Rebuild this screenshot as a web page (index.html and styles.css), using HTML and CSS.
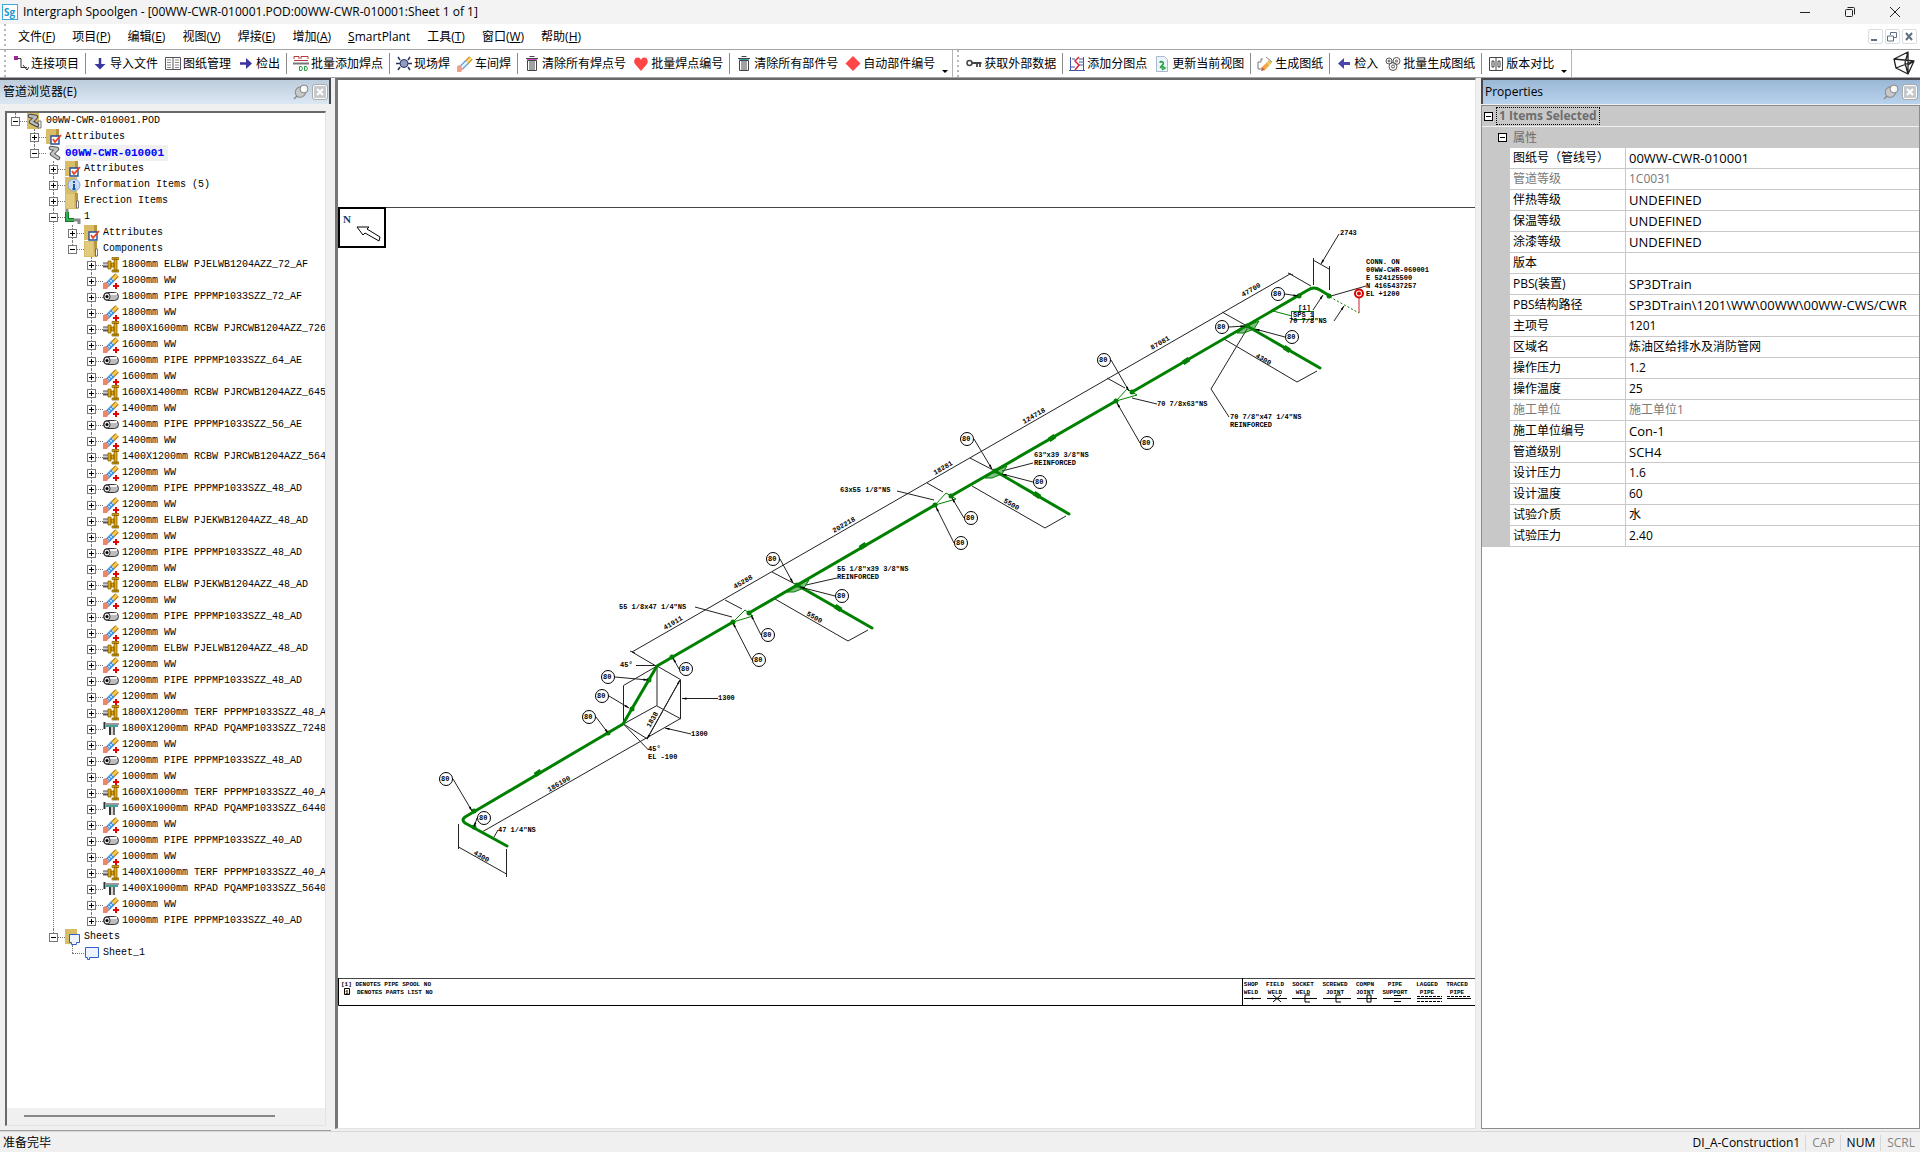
FILE: index.html
```html
<!DOCTYPE html>
<html lang="zh-CN">
<head>
<meta charset="utf-8">
<title>Intergraph Spoolgen</title>
<link rel="stylesheet" href="styles.css">
</head>
<body>
<svg class="sprite" aria-hidden="true">
  <symbol id="i-pin" viewBox="0 0 16 16"><path d="M1 15l5-5" stroke="#888" stroke-width="1.500"/><ellipse cx="7.500" cy="8" rx="5.500" ry="5" fill="#c8c8c8" stroke="#888" transform="rotate(-45 7.500 8)"/><circle cx="11" cy="5" r="4" fill="#f2f2f2" stroke="#888"/><circle cx="10" cy="5" r="2" fill="#fff"/></symbol>
  <symbol id="i-folder" viewBox="0 0 16 16"><path d="M0 0h11l2 2v14H0z" fill="#d9bd66"/><path d="M10 0h3v15h-2z" fill="#b7953e"/><path d="M1 1h8v14H1z" fill="#e2ca7e"/><path d="M11.500 8h2v7h-2z" fill="#fff" stroke="#555" stroke-width=".8"/></symbol>
  <symbol id="i-pod" viewBox="0 0 16 16"><path d="M0 0h12v16H0z" fill="#d9bd66"/><path d="M11 8h3v7h-3z" fill="#eee" stroke="#555" stroke-width=".8"/><path d="M3 3l6 1-5 5 6 3" fill="none" stroke="#444" stroke-width="4.500" stroke-linejoin="round" stroke-linecap="round"/><path d="M3 3l6 1-5 5 6 3" fill="none" stroke="#bbb" stroke-width="2.500" stroke-linejoin="round" stroke-linecap="round"/></symbol>
  <symbol id="i-line" viewBox="0 0 16 16"><path d="M5 3l6 1-5 5 6 4" fill="none" stroke="#555" stroke-width="4.500" stroke-linejoin="round" stroke-linecap="round"/><path d="M5 3l6 1-5 5 6 4" fill="none" stroke="#c4c4c4" stroke-width="2.500" stroke-linejoin="round" stroke-linecap="round"/></symbol>
  <symbol id="i-attr" viewBox="0 0 16 16"><path d="M0 0h12v15H0z" fill="#d9bd66"/><path d="M10 0h3v8h-3z" fill="#b7953e"/><path d="M5 7h8v8H5z" fill="#fff" stroke="#1f4f9d" stroke-width="1.400"/><path d="M7 10l2 3 6-7" fill="none" stroke="#f0401c" stroke-width="1.800"/></symbol>
  <symbol id="i-info" viewBox="0 0 16 16"><path d="M0 0h12v16H0z" fill="#d9bd66"/><circle cx="9" cy="8" r="6" fill="#c9def5" stroke="#86a7cc"/><path d="M9 4v2M9 7v5M7.500 12h3" stroke="#1d56a8" stroke-width="2"/></symbol>
  <symbol id="i-spool" viewBox="0 0 16 16"><path d="M2 0v4" stroke="#888" stroke-width="3"/><path d="M2 3v8h7" fill="none" stroke="#117a2b" stroke-width="4"/><path d="M2 3v8h7" fill="none" stroke="#42c462" stroke-width="1.500"/><path d="M9 11h5v4" fill="none" stroke="#888" stroke-width="3"/></symbol>
  <symbol id="i-fit" viewBox="0 0 16 16"><path d="M0 8h6" stroke="#555" stroke-width="5"/><path d="M0 7.500h6" stroke="#d4d4d4" stroke-width="2"/><path d="M5 4h3v8H5zM8 6h3v4H8zM11 2h3v12h-3zM9 .5h7v2H9zM9 13h7v2H9z" fill="#e3aa14" stroke="#7a5600" stroke-width=".7"/></symbol>
  <symbol id="i-weld" viewBox="0 0 16 16"><path d="M9 7l5-5" stroke="#b47a10" stroke-width="5"/><path d="M9 7l5-5" stroke="#ffcb45" stroke-width="2.500"/><path d="M4 12l6-6" stroke="#2f86dc" stroke-width="5"/><path d="M4 12l6-6" stroke="#cdeaff" stroke-width="2.500" stroke-dasharray="1.500 1"/><path d="M0 16V10l3-1 3 4-2 3z" fill="#f08468"/><path d="M13 10v6M10 13h6" stroke="#e60000" stroke-width="2"/></symbol>
  <symbol id="i-torch" viewBox="0 0 16 16"><path d="M9 7l5-5" stroke="#d08b1c" stroke-width="5"/><path d="M9 7l5-5" stroke="#ffd97c" stroke-width="2.500"/><path d="M4 12l6-6" stroke="#559bdc" stroke-width="5"/><path d="M4 12l6-6" stroke="#dff1ff" stroke-width="2.500"/><path d="M0 16v-6l3-1 3 4-2 3z" fill="#f0a08c"/></symbol>
  <symbol id="i-pipe" viewBox="0 0 16 16"><rect x=".5" y="3.500" width="15" height="8" rx="4" fill="#bdbdbd" stroke="#333"/><path d="M7 5h7" stroke="#f5f5f5" stroke-width="2"/><ellipse cx="4" cy="7.500" rx="3" ry="3.500" fill="#eee" stroke="#333"/><circle cx="4" cy="7.500" r="1.500"/></symbol>
  <symbol id="i-rpad" viewBox="0 0 16 16"><path d="M1.500 1v7" stroke="#333" stroke-width="2"/><path d="M3 3h13" stroke="#999" stroke-width="2"/><path d="M3 5h12" stroke="#0d8080" stroke-width="1.500"/><path d="M7 6v8" stroke="#333" stroke-width="2"/><path d="M9 6v8" stroke="#aaa" stroke-width="1"/><path d="M11 6v8" stroke="#333" stroke-width="1.500"/></symbol>
  <symbol id="i-sheets" viewBox="0 0 16 16"><path d="M0 0h12v15H0z" fill="#d9bd66"/><path d="M4.500 5.500h10v8h-3v2h-5v-2h-2z" fill="#eef4ff" stroke="#2d5fd0"/></symbol>
  <symbol id="i-sheet" viewBox="0 0 16 16"><path d="M1.500 2.500h13v10h-9v2h-2v-2h-2z" fill="#eef4ff" stroke="#2d5fd0"/></symbol>
  <symbol id="i-link" viewBox="0 0 16 16"><path d="M5 2.500h3v9h6M10 9l4 5 2-3" fill="none" stroke="#333"/><path d="M1 0h4v4H1z" fill="#a020a0"/></symbol>
  <symbol id="i-down" viewBox="0 0 16 16"><path d="M8 2v7" stroke="#3a35a0" stroke-width="2.500"/><path d="M2.500 8h11L8 13.500z" fill="#3a35a0"/></symbol>
  <symbol id="i-right" viewBox="0 0 16 16"><path d="M2 7.500h7" stroke="#3a35a0" stroke-width="2.500"/><path d="M8 2l6 5.500L8 13z" fill="#3a35a0"/></symbol>
  <symbol id="i-left" viewBox="0 0 16 16"><path d="M7 7.500h7" stroke="#4a45a8" stroke-width="3"/><path d="M8 2L2 7.500 8 13z" fill="#4a45a8"/></symbol>
  <symbol id="i-table" viewBox="0 0 16 16"><path d="M.5 1.500h15v12H.5zM8 1v13" fill="none" stroke="#555"/><path d="M2 4h4M2 6.500h4M2 9h4M2 11.500h4M10 4h4M10 6.500h4M10 9h4M10 11.500h4" stroke="#888"/></symbol>
  <symbol id="i-batch" viewBox="0 0 16 16"><path d="M1 3V.5h5V3M8 3V.5h7V3M1 4.500h14" fill="none" stroke="#b0383e"/><path d="M0 7.500h16" stroke="#777" stroke-width="2"/><path d="M6.500 10.500h2l1 2-1 2h-2zM11.500 10.500h2l1 2-1 2h-2z" fill="none" stroke="#23a03c"/></symbol>
  <symbol id="i-field" viewBox="0 0 16 16"><path d="M2 1l2 3M14 1l-2 3M2 14l2-3M14 14l-2-3M0 7.500h16" stroke="#28325f" stroke-width="1.500"/><circle cx="8" cy="7.500" r="4" fill="#8f9bbf" stroke="#28325f"/></symbol>
  <symbol id="i-trash-p" viewBox="0 0 16 16"><path d="M5.500 .5h5M2 2.500h12" stroke="#444"/><path d="M3 3.500h10" stroke="#d050c8"/><path d="M3.500 4.500h9v10h-9zM6 5v9M8 5v9M10 5v9" fill="none" stroke="#444"/></symbol>
  <symbol id="i-trash-c" viewBox="0 0 16 16"><path d="M5.500 .5h5M2 2.500h12" stroke="#444"/><path d="M3 3.500h10" stroke="#35a8b0"/><path d="M3.500 4.500h9v10h-9zM6 5v9M8 5v9M10 5v9" fill="none" stroke="#444"/></symbol>
  <symbol id="i-heart" viewBox="0 0 16 16"><path d="M8 15L2 8C0 5 2 1 5 1.500c2 0 3 2 3 3 0-1 1-3 3-3 3-.5 5 3.500 3 6.500z" fill="#ff4646"/></symbol>
  <symbol id="i-diamond" viewBox="0 0 16 16"><path d="M8 0l7.500 7.500L8 15 .5 7.500z" fill="#ff4646"/></symbol>
  <symbol id="i-key" viewBox="0 0 16 16"><circle cx="3.500" cy="7" r="2.500" fill="none" stroke="#444" stroke-width="1.500"/><path d="M6 7h9.500M11 7v4M14 7v4" fill="none" stroke="#444" stroke-width="1.800"/></symbol>
  <symbol id="i-split" viewBox="0 0 16 16"><path d="M1.500 1v13M14.500 1v13M0 14.500h16M3 3h3M10 3h4M10 6h4M10 9h4M2 11h4" stroke="#4358a5"/><path d="M10 1L6 5l4 4-4 5" fill="none" stroke="#d02c38" stroke-width="1.500"/></symbol>
  <symbol id="i-refresh" viewBox="0 0 16 16"><path d="M2.500 .5h8l3 3v12h-11z" fill="#edf3fb" stroke="#a9bad0"/><path d="M5.500 6.500c2-2 5 0 3.500 2s-5 3 0 3.500M8 10l3 2-3 2" fill="none" stroke="#23a03c" stroke-width="1.500"/></symbol>
  <symbol id="i-gen" viewBox="0 0 16 16"><path d="M6 3H4v3H1v7h5" fill="none" stroke="#777"/><path d="M6 13l5-5" stroke="#f5a742" stroke-width="4"/><path d="M11 8l2.500-3" stroke="#e8c65e" stroke-width="4"/><path d="M9 1l6 5" stroke="#888"/><path d="M4 15l1-4 3 3z" fill="#c9614c"/></symbol>
  <symbol id="i-cogs" viewBox="0 0 16 16"><g fill="none" stroke="#555"><circle cx="4" cy="5" r="3"/><circle cx="4" cy="5" r="1"/><circle cx="11.500" cy="5" r="3.500"/><circle cx="11.500" cy="5" r="1"/><circle cx="8" cy="10.500" r="4"/><circle cx="8" cy="10.500" r="1.500"/></g></symbol>
  <symbol id="i-compare" viewBox="0 0 16 16"><path d="M1.500 1.500h13v13h-13zM8 1v14" fill="none" stroke="#444"/><path d="M4 5h2v6H4zM10 5h2v6h-2z" fill="none" stroke="#444"/></symbol>
</svg>

<div class="app">
  <header class="titlebar">
    <svg class="logo" viewBox="0 0 16 16"><rect x=".5" y=".5" width="15" height="15" fill="#fff" stroke="#39a9d6"/><text x="2" y="12">Sg</text></svg>
    <h1>Intergraph Spoolgen - [00WW-CWR-010001.POD:00WW-CWR-010001:Sheet 1 of 1]</h1>
    <div class="winctl">
      <button aria-label="最小化"><svg viewBox="0 0 12 12"><path d="M1 6.500h10"/></svg></button>
      <button aria-label="还原"><svg viewBox="0 0 12 12"><rect x="1.500" y="3.500" width="7" height="7" rx="1"/><path d="M3.500 1.500h6a1 1 0 0 1 1 1v6"/></svg></button>
      <button aria-label="关闭"><svg viewBox="0 0 12 12"><path d="M1 1l10 10M11 1L1 11"/></svg></button>
    </div>
  </header>

  <nav class="menubar">
    <span class="grip"></span>
    <button>文件(<u>F</u>)</button><button>项目(<u>P</u>)</button><button>编辑(<u>E</u>)</button><button>视图(<u>V</u>)</button><button>焊接(<u>E</u>)</button><button>增加(<u>A</u>)</button><button><u>S</u>martPlant</button><button>工具(<u>T</u>)</button><button>窗口(<u>W</u>)</button><button>帮助(<u>H</u>)</button>
    <div class="mdictl">
      <button aria-label="最小化"><svg viewBox="0 0 12 12"><path d="M2 9h6"/></svg></button>
      <button aria-label="还原"><svg viewBox="0 0 12 12"><path class="thin" d="M4.500 4V1.500h6v5H8M1.500 5h6v5h-6z"/></svg></button>
      <button aria-label="关闭"><svg viewBox="0 0 12 12"><path d="M3 2l6 7M9 2L3 9"/></svg></button>
    </div>
  </nav>

  <div class="toolbars">
    <div class="toolbar">
      <span class="grip"></span>
      <button><svg><use href="#i-link"/></svg>连接项目</button>
      <span class="sep"></span>
      <button><svg><use href="#i-down"/></svg>导入文件</button>
      <button><svg><use href="#i-table"/></svg>图纸管理</button>
      <button><svg><use href="#i-right"/></svg>检出</button>
      <span class="sep"></span>
      <button><svg><use href="#i-batch"/></svg>批量添加焊点</button>
      <span class="sep"></span>
      <button><svg><use href="#i-field"/></svg>现场焊</button>
      <button><svg><use href="#i-torch"/></svg>车间焊</button>
      <span class="sep"></span>
      <button><svg><use href="#i-trash-p"/></svg>清除所有焊点号</button>
      <button><svg><use href="#i-heart"/></svg>批量焊点编号</button>
      <span class="sep"></span>
      <button><svg><use href="#i-trash-c"/></svg>清除所有部件号</button>
      <button><svg><use href="#i-diamond"/></svg>自动部件编号</button>
      <button class="more" aria-label="更多"></button>
    </div>
    <div class="toolbar">
      <span class="grip"></span>
      <button><svg><use href="#i-key"/></svg>获取外部数据</button>
      <span class="sep"></span>
      <button><svg><use href="#i-split"/></svg>添加分图点</button>
      <button><svg><use href="#i-refresh"/></svg>更新当前视图</button>
      <span class="sep"></span>
      <button><svg><use href="#i-gen"/></svg>生成图纸</button>
      <span class="sep"></span>
      <button><svg><use href="#i-left"/></svg>检入</button>
      <button><svg><use href="#i-cogs"/></svg>批量生成图纸</button>
      <span class="sep"></span>
      <button><svg><use href="#i-compare"/></svg>版本对比</button>
      <button class="more" aria-label="更多"></button>
    </div>
    <svg class="brand" viewBox="0 0 24 24"><path d="M16 1L2 8l2 9 12 6zM2 8l20 2-18 7M16 1l-3 11 3 11 6-13-6 4" fill="none" stroke="#222" stroke-width="1.300" stroke-linejoin="round"/></svg>
  </div>

  <main class="work">
    <section class="panel browser">
      <header><h2>管道浏览器(E)</h2><button aria-label="固定"><svg><use href="#i-pin"/></svg></button><button class="close" aria-label="关闭"><svg viewBox="0 0 12 12"><path d="M3 3l6 6M9 3L3 9"/></svg></button></header>
      <div class="treebox">
        <div class="treeview"><ul class="tree" id="tree"></ul></div>
        <div class="hscroll"><span></span></div>
      </div>
    </section>

    <section class="canvas">
      <svg viewBox="338 80 1137 1048" preserveAspectRatio="xMidYMid meet">
        <defs>
          <marker id="tip" viewBox="0 0 6 4" refX="6" refY="2" markerWidth="5" markerHeight="3" markerUnits="userSpaceOnUse" orient="auto"><path d="M0 .5L6 2 0 3.500z"/></marker>
        </defs>
        <g class="frame">
          <path d="M338 207.500h1137" class="edge"/>
          <path d="M338 978.500h1137" class="edge"/>
          <path d="M1475 1005.500H338.500V978M1242.500 978v27" class="heavy"/>
          <path d="M339 208h46v39h-46z" class="box"/>
          <path d="M357 227l12 0-2 2 13 8-1 4-14-8-2 2z" fill="#fff"/>
        </g>
        <text x="343" y="223" class="north">N</text>

        <g class="dims">
          <path d="M632 652L1290 274"/>
          <path d="M632 652l24 14M725 600l17 9M772 572l25 13M927 483l16 9M970 458l25 13M1107 378l18 10M1222 312l25 14M1290 274l21 12M630 651l5 2M1288 273l5 2"/>
          <path d="M482 832L680.500 718.500V679.500L657 666l-33.500 19.500V724l33.500-18.500V666M657 706l24 13M623.500 724l24 15M623.500 724l25 26"/>
          <path d="M647 739l33-59" marker-end="url(#tip)"/><path d="M680 680l-33 59" marker-end="url(#tip)"/>
          <path d="M718 698.500H682" marker-end="url(#tip)"/><path d="M691 734l-26-6" marker-end="url(#tip)"/>
          <path d="M636 665.500h20M695 607l37 10M897 491l37 9M837 578l-31 7M1033 463l-31 8M1157 404l-25-6M498 830l-4 7"/>
          <path d="M458.500 824v25M458.500 847l48 27M506.500 849v28"/>
          <path d="M775 599l73 42 20-11M972 486l73 42 21-12M1224 339l73 43 20-11"/>
          <path d="M1247 329l-36 60 18 28"/>
          <path d="M1339 234l-18 30" marker-end="url(#tip)"/>
          <path d="M1313.500 258v27M1329.500 266v24M1313 260l16 9M1366 286l-35 10"/>
          <path d="M1313 310l10-15" marker-end="url(#tip)"/><path d="M1334 321l10-15" marker-end="url(#tip)"/>
        </g>

        <g class="pipe">
          <path d="M507 846l-42-23q-4-3 0-6l158-93 34-58 76-44"/>
          <path d="M749 613l186-108M951 496l165-95M1132 392l176-102q6-4 12 0l10 6"/>
          <path d="M797 585l75 43M995 471l74 43M1247 326l73 42"/>
        </g>
        <g class="thin-green">
          <path d="M733 622l12-12 8 6zM935 505l11-12 10 6zM1116 401l11-12 10 6zM1273 311l19 5"/>
          <path class="pad" d="M787 592l10-7 12-5-5 8-10 4zM985 478l10-7 12-5-5 8-10 4zM1237 333l10-7 12-5-5 8-10 4z"/>
          <path d="M1330 297l29 16" class="dots"/>
        </g>
        <g class="flow">
          <path d="M535 775l6-4M860 548l6-4M1049 440l6-4M1183 363l6-4M835 606l6 4M1034 493l6 4M1284 347l6 4"/>
        </g>
        <g id="welds" class="welds"></g>
        <g id="balloons" class="balloons"></g>

        <g class="origin"><path d="M1359 297v16"/><circle cx="1359" cy="293.500" r="4"/><circle cx="1359" cy="293.500" r="1"/></g>
        <rect x="1291.500" y="311.500" width="22" height="8" class="tag"/>

        <g class="notes">
          <text x="620" y="667">45°</text><text x="619" y="609">55 1/8x47 1/4"NS</text>
          <text x="718" y="700">1300</text><text x="691" y="736">1300</text>
          <text x="648" y="751">45°</text><text x="648" y="759">EL -100</text>
          <text x="498" y="832">47 1/4"NS</text>
          <text x="840" y="492">63x55 1/8"NS</text>
          <text x="837" y="571">55 1/8"x39 3/8"NS</text><text x="837" y="579">REINFORCED</text>
          <text x="1034" y="457">63"x39 3/8"NS</text><text x="1034" y="465">REINFORCED</text>
          <text x="1157" y="406">70 7/8x63"NS</text>
          <text x="1230" y="419">70 7/8"x47 1/4"NS</text><text x="1230" y="427">REINFORCED</text>
          <text x="1340" y="235">2743</text>
          <text x="1366" y="264">CONN. ON</text><text x="1366" y="272">00WW-CWR-060001</text><text x="1366" y="280">E 524125500</text><text x="1366" y="288">N 4165437257</text><text x="1366" y="296">EL +1200</text>
          <text x="1298" y="310">[1]</text><text x="1293" y="317">SPS 1</text><text x="1289" y="323">70 7/8"NS</text>
          <text transform="translate(665 630) rotate(-30)">41911</text>
          <text transform="translate(549 792) rotate(-30)">186100</text>
          <text transform="translate(735 589) rotate(-30)">45288</text>
          <text transform="translate(834 533) rotate(-30)">202218</text>
          <text transform="translate(935 475) rotate(-30)">18281</text>
          <text transform="translate(1024 424) rotate(-30)">124718</text>
          <text transform="translate(1152 350) rotate(-30)">87081</text>
          <text transform="translate(1243 297) rotate(-30)">47700</text>
          <text transform="translate(650 728) rotate(-60)">1838</text>
          <text transform="translate(473 854) rotate(30)">4300</text>
          <text transform="translate(806 615) rotate(30)">5500</text>
          <text transform="translate(1003 502) rotate(30)">5500</text>
          <text transform="translate(1255 357) rotate(30)">4300</text>
        </g>

        <g class="legend">
          <text x="341" y="986">[1] DENOTES PIPE SPOOL NO</text>
          <text x="345" y="994">1</text><text x="357" y="994">DENOTES PARTS LIST NO</text>
          <path d="M344.500 988.500h5v6h-5z"/>
          <g class="mid">
            <text x="1251" y="986">SHOP</text><text x="1251" y="994">WELD</text>
            <text x="1275" y="986">FIELD</text><text x="1275" y="994">WELD</text>
            <text x="1303" y="986">SOCKET</text><text x="1303" y="994">WELD</text>
            <text x="1335" y="986">SCREWED</text><text x="1335" y="994">JOINT</text>
            <text x="1365" y="986">COMPN</text><text x="1365" y="994">JOINT</text>
            <text x="1395" y="986">PIPE</text><text x="1395" y="994">SUPPORT</text>
            <text x="1427" y="986">LAGGED</text><text x="1427" y="994">PIPE</text>
            <text x="1457" y="986">TRACED</text><text x="1457" y="994">PIPE</text>
          </g>
          <path d="M1244 998.500h17M1267 998.500h20M1292 998.500h25M1323 998.500h28M1357 998.500h20M1383 998.500h28M1447 998.500h24M1273 995l8 7M1281 995l-8 7M1310 995h-5v7h5M1341 995h-5v7h5M1367 995h4v7h-4zM1394 995.500h7M1394 1001.500h7"/>
          <path d="M1417 996.500h25M1417 1001.500h25M1447 996.500h24" stroke-dasharray="3 1"/><path d="M1417 998.500h25"/>
          <circle cx="1252.500" cy="998.500" r="1"/>
        </g>
      </svg>
    </section>

    <section class="panel properties">
      <header><h2>Properties</h2><button aria-label="固定"><svg><use href="#i-pin"/></svg></button><button class="close" aria-label="关闭"><svg viewBox="0 0 12 12"><path d="M3 3l6 6M9 3L3 9"/></svg></button></header>
      <div class="propbox">
        <div class="group top"><button class="exp" aria-label="折叠"></button><span>1 Items Selected</span></div>
        <div class="group sub"><button class="exp" aria-label="折叠"></button><span>属性</span></div>
        <div class="rows">
        <table>
          <tr><th scope="row">图纸号（管线号）</th><td class="latin">00WW-CWR-010001</td></tr>
          <tr class="dim"><th scope="row">管道等级</th><td>1C0031</td></tr>
          <tr><th scope="row">伴热等级</th><td class="latin">UNDEFINED</td></tr>
          <tr><th scope="row">保温等级</th><td class="latin">UNDEFINED</td></tr>
          <tr><th scope="row">涂漆等级</th><td class="latin">UNDEFINED</td></tr>
          <tr><th scope="row">版本</th><td></td></tr>
          <tr><th scope="row">PBS(装置)</th><td class="latin">SP3DTrain</td></tr>
          <tr><th scope="row">PBS结构路径</th><td class="latin">SP3DTrain\1201\WW\00WW\00WW-CWS/CWR</td></tr>
          <tr><th scope="row">主项号</th><td>1201</td></tr>
          <tr><th scope="row">区域名</th><td>炼油区给排水及消防管网</td></tr>
          <tr><th scope="row">操作压力</th><td>1.2</td></tr>
          <tr><th scope="row">操作温度</th><td>25</td></tr>
          <tr class="dim"><th scope="row">施工单位</th><td>施工单位1</td></tr>
          <tr><th scope="row">施工单位编号</th><td class="latin">Con-1</td></tr>
          <tr><th scope="row">管道级别</th><td class="latin">SCH4</td></tr>
          <tr><th scope="row">设计压力</th><td>1.6</td></tr>
          <tr><th scope="row">设计温度</th><td>60</td></tr>
          <tr><th scope="row">试验介质</th><td>水</td></tr>
          <tr><th scope="row">试验压力</th><td>2.40</td></tr>
        </table>
        </div>
      </div>
    </section>
  </main>

  <footer class="statusbar"><span class="grow">准备完毕</span><span>DI_A-Construction1</span><span class="off">CAP</span><span>NUM</span><span class="off">SCRL</span></footer>
</div>
<script src="app.js"></script>
</body>
</html>
```
FILE: styles.css
```css
* { box-sizing: border-box; }
body {
  margin: 0;
  font: 12px/16px "Open Sans", "Noto Sans CJK SC", sans-serif;
  color: #000;
  background: #f0f0f0;
}
button { font: inherit; color: inherit; background: none; border: 0; padding: 0; }
h1, h2 { margin: 0; font-size: 12px; font-weight: 400; white-space: nowrap; }
.sprite { position: absolute; width: 0; height: 0; }
.app { display: flex; flex-direction: column; height: 100vh; min-width: 1200px; }

.titlebar { display: flex; align-items: center; height: 24px; background: #f3f3f3; }
.logo { width: 16px; height: 16px; margin: 0 5px 0 2px; }
.logo text { font: bold 10px "Open Sans", sans-serif; fill: #2198cc; }
.titlebar h1 { flex: 1; }
.winctl { display: flex; gap: 33px; padding-right: 19px; }
.winctl svg { display: block; width: 12px; height: 12px; fill: none; stroke: #222; }

.menubar { display: flex; align-items: center; height: 26px; background: #fff; border-bottom: 1px solid #a5a5a9; }
.menubar > button { padding: 0 8px 0 9px; white-space: nowrap; }
.grip { width: 2px; margin-left: 4px; align-self: stretch; background: repeating-linear-gradient(#b8b8b8 0 2px, #fff 2px 5px); }
.menubar .grip { margin-right: 3px; }
.mdictl { display: flex; gap: 2px; margin-left: auto; padding-right: 3px; }
.mdictl button { width: 15px; height: 15px; border: 1px solid #d9dde2; border-radius: 2px; }
.mdictl svg { display: block; width: 12px; height: 12px; fill: none; stroke: #5f6f80; stroke-width: 2; }
.mdictl .thin { stroke-width: 1; }

.toolbars { display: flex; height: 28px; background: #fff; border-bottom: 1px solid #a5a5a9; }
.toolbar { display: flex; align-items: center; border-right: 1px solid #b4b4b8; padding-right: 4px; }
.toolbar .grip { margin-right: 3px; }
.toolbar button { display: flex; align-items: center; gap: 2px; padding: 0 3px 0 4px; white-space: nowrap; }
.toolbar svg { width: 16px; height: 16px; }
.toolbar .sep { width: 1px; height: 21px; margin: 0 2px 0 3px; background: #8c8c8c; }
.toolbar .more { align-self: flex-end; margin-bottom: 4px; padding: 0 0 0 4px; }
.toolbar .more::before { content: ""; border: 3px solid transparent; border-top-color: #000; border-bottom: 0; }
.brand { width: 24px; height: 24px; margin: 1px 4px 0 auto; }

.work { flex: 1; display: flex; min-height: 0; }
.panel { display: flex; flex-direction: column; min-height: 0; }
.panel > header {
  display: flex; align-items: center; gap: 4px; height: 26px; padding: 0 2px 0 3px;
  border: 2px solid #4a4a4e; border-width: 2px 2px 0 0;
  background: linear-gradient(#bccddd, #dce7f3);
}
.panel header h2 { flex: 1; }
.panel header svg { display: block; width: 16px; height: 16px; }
.panel .close { width: 14px; height: 14px; background: #c6c9cc; border: 1px solid #fff; border-radius: 2px; outline: 1px solid #aaa; }
.panel .close svg { width: 12px; height: 12px; stroke: #fff; stroke-width: 2; }

.browser { width: 331px; border-bottom: 1px solid #a0a0a0; }
.browser > header { border-left: 0; }
.treebox {
  flex: 1; display: flex; flex-direction: column; min-height: 0;
  margin: 7px 5px 4px 5px; border: 1px solid #e3e3e3; border-top: 2px solid #696969; border-left: 2px solid #696969;
}
.treeview { flex: 1; overflow: hidden; background: #fff; }
.hscroll { height: 17px; padding: 7px 50px 0 17px; }
.hscroll span { display: block; height: 2px; background: #868a86; }

.tree, .tree ul { margin: 0; padding: 0; list-style: none; }
.tree { font: 10px/16px "Liberation Mono", monospace; white-space: nowrap; }
.tree ul { margin-left: 19px; }
.tree li { position: relative; }
.tree li::before { content: ""; position: absolute; left: 8px; top: 0; height: 100%; border-left: 1px dotted #777; }
.tree li:last-child::before { height: 8px; }
.row { position: relative; display: flex; align-items: center; height: 16px; }
.row::before { content: ""; position: absolute; left: 8px; top: 8px; width: 12px; border-top: 1px dotted #777; }
.row svg { width: 16px; height: 16px; flex: none; margin: 0 3px 0 7px; position: relative; }
.exp {
  position: relative; display: flex; align-items: center; justify-content: center; flex: none;
  width: 9px; height: 9px; border: 1px solid #777; background: #fff;
}
.exp::before { content: ""; width: 5px; height: 1px; background: #000; }
.exp.plus::after { content: ""; position: absolute; left: 3px; top: 1px; width: 1px; height: 5px; background: #000; }
.row .exp, .row .gap { margin-left: 4px; }
.gap { width: 9px; }
.current { font-size: 11px; font-weight: 700; color: #00f; background: #f0f0f0; padding-right: 4px; }

.canvas { flex: 1; min-width: 0; margin: 0 1px 2px 4px; border: 1px solid #e3e3e3; border-top: 2px solid #696969; border-left: 3px solid #777; background: #fff; }
.canvas > svg { display: block; width: 100%; height: 100%; }
.canvas path, .canvas rect { fill: none; stroke: #000; }
.frame .edge { stroke: #444; }
.frame .heavy { stroke: #000; stroke-width: 1; }
.frame .box { stroke-width: 2; }
.north { font: bold 11px "Liberation Serif", serif; fill: #103a78; }
.dims path { stroke: #222; }
.canvas marker path { fill: #000; stroke: none; }
.canvas .pipe path { stroke: #008000; stroke-width: 3; stroke-linecap: round; stroke-linejoin: round; }
.canvas .thin-green path { stroke: #008000; }
.canvas .thin-green .pad { fill: #008000; fill-opacity: .5; }
.canvas .thin-green .dots { stroke-dasharray: 2 2; }
.canvas .flow path { stroke: #008000; stroke-width: 5; }
.welds circle { fill: #008000; }
.balloons circle { fill: #fff; stroke: #000; }
.balloons path { stroke: #222; }
.balloons text, .notes text { font: bold 7px "Liberation Mono", monospace; }
.origin path, .origin circle { stroke: #d00; stroke-width: 2; fill: #fff; }
.canvas .origin path { stroke: #c22; stroke-width: 1; }
.canvas .tag { stroke: #008000; }
.legend text { font: bold 6px "Liberation Mono", monospace; }
.legend .mid { text-anchor: middle; }

.properties { width: 439px; margin-left: 4px; }
.properties > header { background: linear-gradient(#9ab7d5, #b9d3ed); border-width: 2px 0 0 2px; padding: 0 3px 0 2px; }
.propbox { flex: 1; margin: 1px 0 2px; border: 1px solid #8c8c8c; background: #fff; }
.group { display: flex; align-items: center; height: 21px; background: #c8c8c8; color: #6d6d6d; }
.group .exp { border-color: #000; }
.group.top { padding-left: 2px; gap: 3px; border-bottom: 1px solid #f0f0f0; }
.group.top span { font-weight: 700; border: 1px dotted #000; padding: 0 2px; }
.group.sub { padding-left: 16px; gap: 6px; }
.rows { padding-left: 28px; background: #c8c8c8; }
.rows table { width: 100%; border-collapse: separate; border-spacing: 0; background: #fff; }
.rows th, .rows td { height: 21px; padding: 0 3px; border-bottom: 1px solid #c8c8c8; font-weight: 400; text-align: left; white-space: nowrap; }
.rows th { width: 116px; border-right: 1px solid #c8c8c8; }
.rows .latin { font-size: 13px; }
.dim { color: #787878; }

.statusbar { display: flex; align-items: center; height: 21px; padding-top: 1px; border-top: 1px solid #d7d7d7; }
.statusbar span { padding: 0 5px 0 6px; border-right: 1px solid #d7d7d7; }
.statusbar .grow { flex: 1; padding: 0 3px; border: 0; }
.statusbar .off { color: #838383; }
.statusbar span:last-child { border: 0; }
```
FILE: app.js
```js
const W = d => ['weld', d + 'mm WW'];
const P = (d, c) => ['pipe', d + 'mm PIPE PPPMP1033SZZ_' + c];
const F = (d, c) => ['fit', d + 'mm ' + c];
const R = (d, c) => ['rpad', d + 'mm RPAD PQAMP1033SZZ_' + c];

const components = [
  F('1800', 'ELBW PJELWB1204AZZ_72_AF'), W(1800), P(1800, '72_AF'), W(1800),
  F('1800X1600', 'RCBW PJRCWB1204AZZ_7264_AFAE'), W(1600), P(1600, '64_AE'), W(1600),
  F('1600X1400', 'RCBW PJRCWB1204AZZ_6456_AEAE'), W(1400), P(1400, '56_AE'), W(1400),
  F('1400X1200', 'RCBW PJRCWB1204AZZ_5648_AEAD'), W(1200), P(1200, '48_AD'), W(1200),
  F('1200', 'ELBW PJEKWB1204AZZ_48_AD'), W(1200), P(1200, '48_AD'), W(1200),
  F('1200', 'ELBW PJEKWB1204AZZ_48_AD'), W(1200), P(1200, '48_AD'), W(1200),
  F('1200', 'ELBW PJELWB1204AZZ_48_AD'), W(1200), P(1200, '48_AD'), W(1200),
  F('1800X1200', 'TERF PPPMP1033SZZ_48_AD'), R('1800X1200', '7248_AFAD'), W(1200), P(1200, '48_AD'), W(1000),
  F('1600X1000', 'TERF PPPMP1033SZZ_40_AD'), R('1600X1000', '6440_AEAD'), W(1000), P(1000, '40_AD'), W(1000),
  F('1400X1000', 'TERF PPPMP1033SZZ_40_AD'), R('1400X1000', '5640_AEAD'), W(1000), P(1000, '40_AD')
];

const tree = ['pod', '00WW-CWR-010001.POD', [
  ['attr', 'Attributes'],
  ['line', '00WW-CWR-010001', [
    ['attr', 'Attributes'],
    ['info', 'Information Items (5)'],
    ['folder', 'Erection Items'],
    ['spool', '1', [
      ['attr', 'Attributes'],
      ['folder', 'Components', components]
    ]],
    ['sheets', 'Sheets', [['sheet', 'Sheet_1']]]
  ]]
]];

function node([icon, label, kids]) {
  const exp = icon === 'sheet'
    ? '<span class="gap"></span>'
    : `<button class="exp${kids ? '' : ' plus'}" aria-label="${kids ? '折叠' : '展开'}"></button>`;
  const cls = icon === 'line' ? ' class="current"' : '';
  const list = kids ? `<ul>${kids.map(node).join('')}</ul>` : '';
  return `<li><div class="row">${exp}<svg><use href="#i-${icon}"/></svg><span${cls}>${label}</span></div>${list}</li>`;
}
document.getElementById('tree').innerHTML = node(tree);

const welds = [[474,811],[474,827],[608,733],[632,709],[649,680],[672,657],[733,622],[749,613],[797,585],
  [935,505],[951,496],[995,471],[1116,401],[1132,392],[1247,326],[1299,296],[1329,296]];
document.getElementById('welds').innerHTML =
  welds.map(([x, y]) => `<circle cx="${x}" cy="${y}" r="2.5"/>`).join('');

// balloon centre, then the point its leader touches
const balloons = [[446,779,472,811],[484,818,474,827],[589,717,608,733],[602,696,629,708],[608,677,648,680],
  [686,669,673,658],[759,660,733,623],[768,635,751,615],[773,559,793,583],[842,596,800,587],[961,543,936,507],
  [971,518,952,498],[967,439,992,469],[1040,482,1002,474],[1147,443,1117,403],[1104,360,1129,391],
  [1222,327,1245,326],[1292,337,1255,329],[1278,294,1298,296]];
document.getElementById('balloons').innerHTML = balloons.map(([x, y, tx, ty]) => {
  const sx = x + 7 * Math.sign(tx - x);
  return `<path d="M${sx} ${y}L${tx} ${ty}" marker-end="url(#tip)"/><circle cx="${x}" cy="${y}" r="6.5"/><text x="${x - 5}" y="${y + 2}">80</text>`;
}).join('');
```
